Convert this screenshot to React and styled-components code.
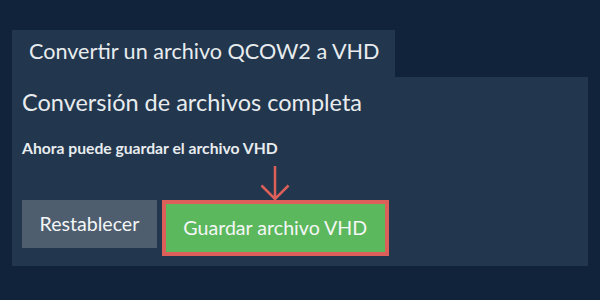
import React from "react";
import styled, { createGlobalStyle } from "styled-components";

const GlobalStyle = createGlobalStyle`
  html, body {
    margin: 0;
    padding: 0;
    background: #11233a;
    font-family: Lato, "Open Sans", sans-serif;
  }
`;

const Page = styled.div`
  width: 600px;
  height: 300px;
  padding: 30px 0 0 12px;
  box-sizing: border-box;
`;

const Tab = styled.div`
  width: 383px;
  height: 47px;
  box-sizing: border-box;
  padding-left: 17px;
  background: #22374d;
  color: #e8ecef;
  font-size: 21.6px;
  line-height: 43px;
  white-space: nowrap;
`;

const Panel = styled.div`
  width: 576px;
  height: 189px;
  box-sizing: border-box;
  padding: 11px 10px 0;
  background: #22374d;
  color: #e8ecef;
`;

const Heading = styled.h2`
  margin: 0;
  font-size: 23.5px;
  font-weight: 400;
  line-height: 28px;
`;

const Message = styled.p`
  margin: 22px 0 0;
  font-size: 15.7px;
  font-weight: 700;
  line-height: 20px;
`;

const Actions = styled.div`
  display: flex;
  align-items: flex-start;
  gap: 5px;
  margin-top: 42px;
`;

const Button = styled.button`
  position: relative;
  height: ${({ $primary }) => ($primary ? "56px" : "48px")};
  box-sizing: border-box;
  padding: 0 17.5px;
  border: ${({ $primary }) => ($primary ? "4px solid #dc5f5a" : "none")};
  background: ${({ $primary }) => ($primary ? "#5cb85c" : "#4e5e6e")};
  color: #f4f6f7;
  font-family: Lato, "Open Sans", sans-serif;
  font-size: 19.6px;
  line-height: 24px;
  cursor: pointer;
`;

const Arrow = styled.svg`
  position: absolute;
  left: 50%;
  top: -39px;
  margin-left: -15px;
  pointer-events: none;
`;

export default function App() {
  return (
    <>
      <GlobalStyle />
      <Page>
        <Tab>Convertir un archivo QCOW2 a VHD</Tab>
        <Panel>
          <Heading>Conversión de archivos completa</Heading>
          <Message>Ahora puede guardar el archivo VHD</Message>
          <Actions>
            <Button>Restablecer</Button>
            <Button $primary>
              <Arrow width="30" height="36" viewBox="0 0 30 36">
                <path
                  d="M15 1 V34 M1.5 20.5 L15 34 L28.5 20.5"
                  fill="none"
                  stroke="#dc5f5a"
                  strokeWidth="2.5"
                />
              </Arrow>
              Guardar archivo VHD
            </Button>
          </Actions>
        </Panel>
      </Page>
    </>
  );
}
